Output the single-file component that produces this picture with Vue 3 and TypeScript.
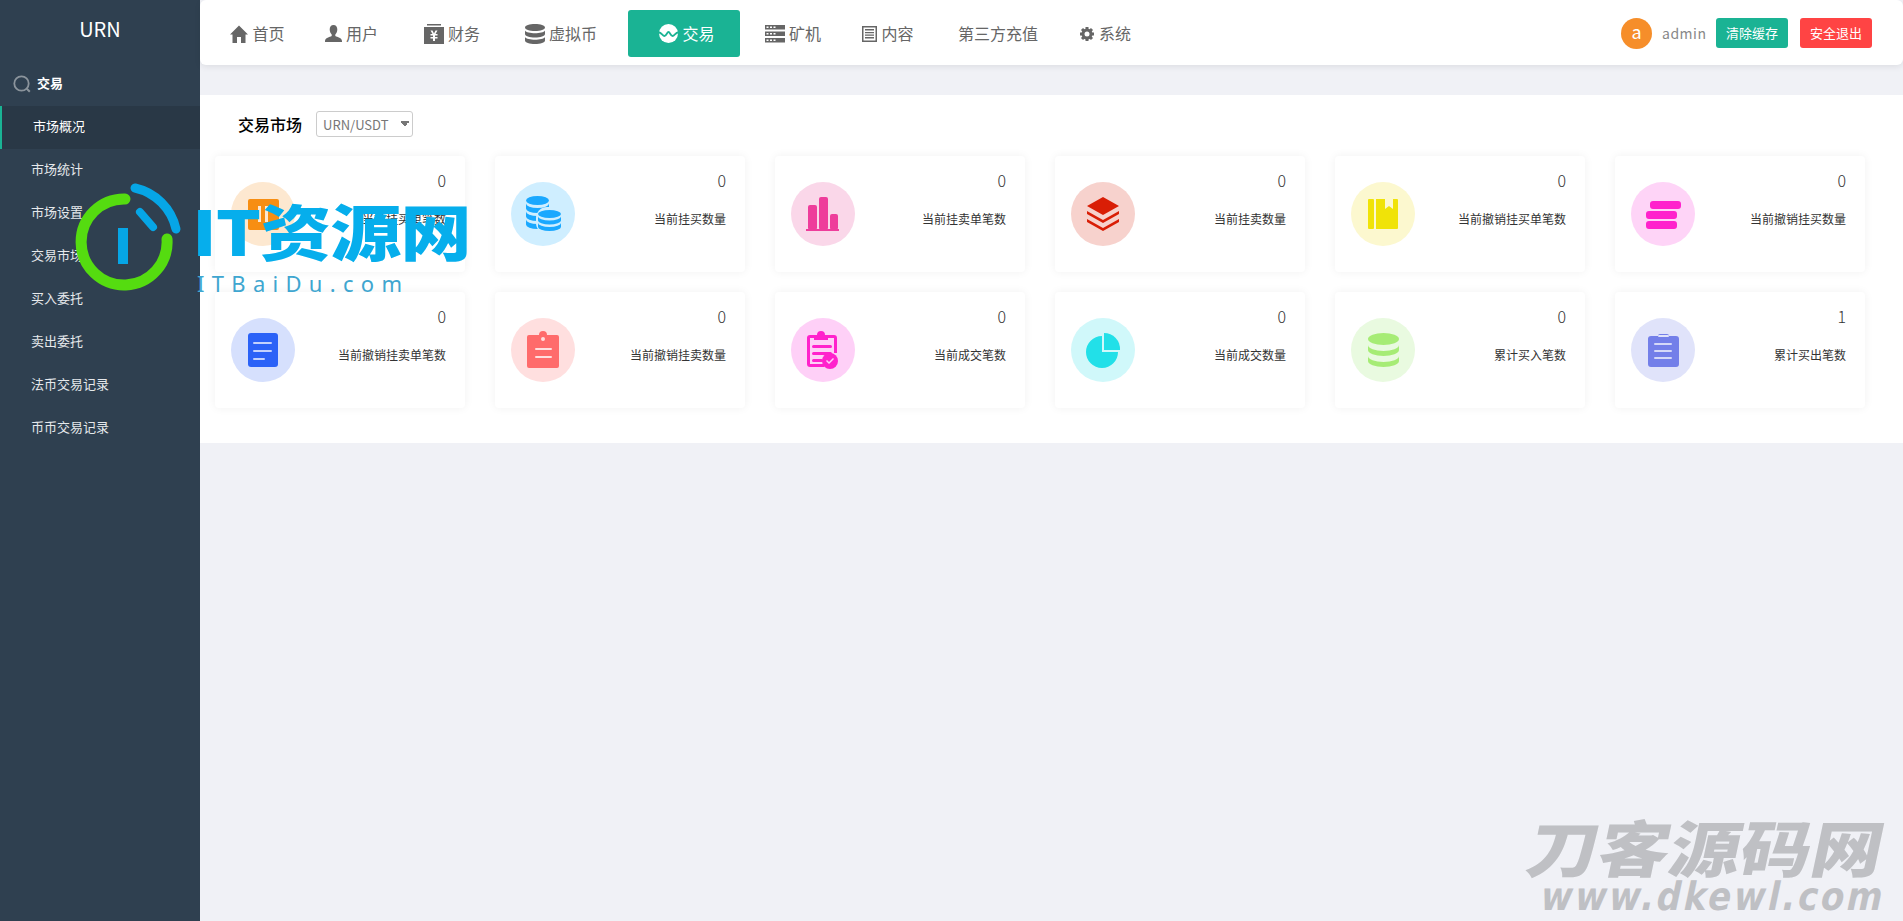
<script setup lang="ts">
interface Shape {
  d: string
  fill: string
}

interface Card {
  label: string
  value: number
  bg: string
  shapes: Shape[]
}

// rounded rectangle as a path
const rr = (x: number, y: number, w: number, h: number, r: number) =>
  `M${x + r} ${y}h${w - 2 * r}a${r} ${r} 0 0 1 ${r} ${r}v${h - 2 * r}a${r} ${r} 0 0 1 -${r} ${r}h-${w - 2 * r}a${r} ${r} 0 0 1 -${r} -${r}v-${h - 2 * r}a${r} ${r} 0 0 1 ${r} -${r}z`

// database style stack: a top ellipse and n bands below it
const stack = (cx: number, rx: number, top: number, ry: number, step: number, band: number, n: number) => {
  const l = cx - rx
  const y = top + ry
  let d = `M${l} ${y}a${rx} ${ry} 0 1 1 ${2 * rx} 0a${rx} ${ry} 0 1 1 -${2 * rx} 0z`
  for (let i = 1; i <= n; i++) {
    const y1 = y + i * step
    d += `M${l} ${y1 - band}a${rx} ${ry} 0 0 0 ${2 * rx} 0V${y1}a${rx} ${ry} 0 0 1 -${2 * rx} 0z`
  }
  return d
}

const cards: Card[] = [
  {
    label: '当前挂买单笔数', value: 0, bg: '#fde8d0',
    shapes: [
      { d: rr(17, 17, 31, 31, 2), fill: '#f78e12' },
      { d: 'M27 24h3v16h-3zM34 24h3v16h-3z', fill: '#fde8d0' }
    ]
  },
  {
    label: '当前挂买数量', value: 0, bg: '#cfeeff',
    shapes: [
      { d: stack(26.5, 11.5, 14, 4.5, 8, 5, 3), fill: '#1aa8ff' },
      { d: rr(25, 25, 27, 27, 11), fill: '#cfeeff' },
      { d: stack(38.5, 11.5, 28, 4, 6.5, 4, 2), fill: '#1aa8ff' }
    ]
  },
  {
    label: '当前挂卖单笔数', value: 0, bg: '#fad7e9',
    shapes: [
      { d: rr(17, 23, 9, 25, 2) + rr(28, 15, 9, 33, 2) + rr(39, 32, 8, 16, 2) + 'M15 47h33v2H15z', fill: '#ee3d9b' }
    ]
  },
  {
    label: '当前挂卖数量', value: 0, bg: '#f7d2cd',
    shapes: [
      { d: 'M32 15l16 9-16 9-16-9zM16 29l16 9 16-9v3L32 41l-16-9zM16 37l16 9 16-9v3L32 49l-16-9z', fill: '#d91e06' }
    ]
  },
  {
    label: '当前撤销挂买单笔数', value: 0, bg: '#fcf8cf',
    shapes: [
      { d: rr(17, 17, 6, 30, 1) + 'M25 17h9v10l4-3 4 3V17h4a1 1 0 0 1 1 1v28a1 1 0 0 1-1 1H25z', fill: '#f0e308' }
    ]
  },
  {
    label: '当前撤销挂买数量', value: 0, bg: '#fed4f7',
    shapes: [
      { d: rr(19, 19, 31, 8, 3) + rr(15, 29, 31, 8, 3) + rr(15, 39, 31, 8, 3), fill: '#ff22cc' }
    ]
  },
  {
    label: '当前撤销挂卖单笔数', value: 0, bg: '#d6e0fd',
    shapes: [
      { d: rr(17, 15, 30, 34, 3), fill: '#2b62f7' },
      { d: rr(22, 24, 19, 2, 1) + rr(22, 32, 19, 2, 1) + rr(22, 40, 12, 2, 1), fill: '#c3d2fd' }
    ]
  },
  {
    label: '当前撤销挂卖数量', value: 0, bg: '#ffdfdf',
    shapes: [
      { d: 'M18 17h10a4 4 0 0 1 8 0h10a2 2 0 0 1 2 2v29a2 2 0 0 1-2 2H18a2 2 0 0 1-2-2V19a2 2 0 0 1 2-2z', fill: '#ff6b6b' },
      { d: 'M32 19a2 2 0 1 1 0 4 2 2 0 0 1 0-4z' + rr(24, 30, 17, 2, 1) + rr(24, 38, 17, 2, 1), fill: '#ffdfdf' }
    ]
  },
  {
    label: '当前成交笔数', value: 0, bg: '#fed0f7',
    shapes: [
      { d: 'M19 17h7a4 4 0 0 1 8 0h9a3 3 0 0 1 3 3v15h-3V20h-6v2H23v-2h-4v26h14v3H19a3 3 0 0 1-3-3V20a3 3 0 0 1 3-3z', fill: '#ff22cc' },
      { d: rr(21, 27, 20, 3, 1.5) + rr(21, 34, 20, 3, 1.5) + rr(21, 41, 11, 3, 1.5), fill: '#ff22cc' },
      { d: 'M39 35a8 8 0 1 1 0 16 8 8 0 0 1 0-16z', fill: '#ff22cc' },
      { d: 'M35 43l3 3 5-5-1-1-4 4-2-2z', fill: '#fed0f7' }
    ]
  },
  {
    label: '当前成交数量', value: 0, bg: '#d0f8fa',
    shapes: [
      { d: 'M31 18v16h16a16 16 0 1 1-16-16z', fill: '#22e0e8' },
      { d: 'M33 15a16 16 0 0 1 16 17H33z', fill: '#22e0e8' }
    ]
  },
  {
    label: '累计买入笔数', value: 0, bg: '#e9fae0',
    shapes: [{ d: stack(32.5, 15.5, 15, 6, 11, 5, 2), fill: '#a6ec75' }]
  },
  {
    label: '累计买出笔数', value: 1, bg: '#e0e3fa',
    shapes: [
      { d: rr(17, 18, 31, 31, 3) + rr(27, 16, 11, 4, 2), fill: '#737fe9' },
      { d: rr(27, 17, 11, 2, 1), fill: '#e0e3fa' },
      { d: rr(23, 25, 18, 2, 1) + rr(23, 32, 18, 2, 1) + rr(23, 39, 18, 2, 1), fill: '#d5d9f8' }
    ]
  }
]

const subMenus = ['市场统计', '市场设置', '交易市场', '买入委托', '卖出委托', '法币交易记录', '币币交易记录']

const navItems = [
  { key: 'home', label: '首页', width: 95 },
  { key: 'user', label: '用户', width: 93 },
  { key: 'finance', label: '财务', width: 108 },
  { key: 'coin', label: '虚拟币', width: 110 },
  { key: 'trade', label: '交易', width: 112, active: true },
  { key: 'miner', label: '矿机', width: 106 },
  { key: 'content', label: '内容', width: 84 },
  { key: 'recharge', label: '第三方充值', width: 136 },
  { key: 'system', label: '系统', width: 78 }
]
</script>

<template>
  <div class="page">
    <aside class="sidebar">
      <div class="brand">URN</div>
      <div class="section">
        <svg class="section-icon" viewBox="0 0 18 18" width="18" height="18">
          <circle cx="8.5" cy="8.5" r="7.2" fill="none" stroke="#8b949c" stroke-width="1.8" />
          <path d="M13.8 13.8l3 3" stroke="#8b949c" stroke-width="2" />
        </svg>
        <span>交易</span>
      </div>
      <div class="menu-item active">市场概况</div>
      <div v-for="m in subMenus" :key="m" class="menu-item">{{ m }}</div>
    </aside>

    <main class="main">
      <header class="topbar">
        <nav class="nav">
          <a
            v-for="item in navItems"
            :key="item.key"
            class="nav-item"
            :class="{ current: item.active }"
            :style="{ width: item.width + 'px' }"
          >
            <svg v-if="item.key === 'home'" viewBox="0 0 18 18" width="18" height="18">
              <path d="M9 0.5L18 9.5h-2.5V18h-4.5v-6H7v6H2.500V9.500H0z" fill="#666" />
            </svg>
            <svg v-else-if="item.key === 'user'" viewBox="0 0 17 17" width="17" height="17">
              <path d="M8.500 0c2.500 0 3.800 2 3.800 4.500 0 2-1 4-2 5v1.500c2 1 6.700 2 6.700 5v1H0v-1c0-3 4.700-4 6.700-5V9.500c-1-1-2-3-2-5C4.700 2 6 0 8.500 0z" fill="#666" />
            </svg>
            <svg v-else-if="item.key === 'finance'" viewBox="0 0 20 20" width="20" height="20">
              <path d="M3 0h14v1.500H3z" fill="#666" />
              <path d="M0 3h20v17H0z" fill="#666" />
              <path d="M6.500 6.500h2l1.500 3 1.500-3h2L11.500 10h2v1.500H11V13h2.500v1.500H11V17H9v-2.500H6.500V13H9v-1.500H6.500V10h2z" fill="#fff" />
            </svg>
            <svg v-else-if="item.key === 'coin'" viewBox="0 0 20 20" width="20" height="20">
              <path d="M0 3.500C0 1.500 4.500 0 10 0s10 1.500 10 3.500S15.500 7 10 7 0 5.500 0 3.500zM0 6.500C1 8.500 5.500 9.200 10 9.200S19 8.500 20 6.500V10c0 2-4.500 3.500-10 3.500S0 12 0 10zM0 13C1 15 5.500 15.700 10 15.700S19 15 20 13v3.500c0 2-4.500 3.500-10 3.500S0 18.500 0 16.500z" fill="#666" />
            </svg>
            <svg v-else-if="item.key === 'trade'" viewBox="0 0 19 19" width="19" height="19">
              <circle cx="9.500" cy="9.500" r="9.500" fill="#fff" />
              <path d="M0 8.500c2.500 0 3.500 3.500 5.500 3.500S8 8 9.500 8s2 4 4 4 3-3.500 5.500-3.500" fill="none" stroke="#1ab394" stroke-width="1.800" />
            </svg>
            <svg v-else-if="item.key === 'miner'" viewBox="0 0 20 18" width="20" height="18">
              <path d="M0 0h20v4.500H0zM0 6.500h20V11H0zM0 13h20v4.500H0z" fill="#666" />
              <path d="M1.500 1.500h2v1.500h-2zM5 1.500h2v1.500H5zM8.500 1.500h2v1.500h-2zM1.500 8h2v1.500h-2zM5 8h2v1.500H5zM8.500 8h2v1.500h-2zM1.500 14.500h2V16h-2zM5 14.500h2V16H5zM8.500 14.500h2V16h-2z" fill="#fff" />
            </svg>
            <svg v-else-if="item.key === 'content'" viewBox="0 0 15 16" width="15" height="16">
              <path d="M0 0h15v16H0zM1.500 1.500v13h12v-13z" fill="#666" fill-rule="evenodd" />
              <path d="M3 3h9v1.500H3zM3 6h9v1.300H3zM3 8.500h9v1.300H3zM3 11h9v1.500H3z" fill="#666" />
            </svg>
            <svg v-else-if="item.key === 'system'" viewBox="0 0 16 16" width="16" height="16">
              <path d="M8 1v14M1 8h14M3 3l10 10M13 3L3 13" stroke="#666" stroke-width="3" />
              <circle cx="8" cy="8" r="5.500" fill="#666" />
              <circle cx="8" cy="8" r="2.500" fill="#fff" />
            </svg>
            <span>{{ item.label }}</span>
          </a>
        </nav>
        <div class="userbox">
          <span class="avatar">a</span>
          <span class="username">admin</span>
          <button class="btn green">清除缓存</button>
          <button class="btn red">安全退出</button>
        </div>
      </header>

      <section class="panel">
        <div class="panel-head">
          <span class="panel-title">交易市场</span>
          <select class="market">
            <option>URN/USDT</option>
          </select>
        </div>
        <div class="grid">
          <div v-for="c in cards" :key="c.label" class="card">
            <svg class="card-icon" viewBox="0 0 64 64" width="64" height="64">
              <circle cx="32" cy="32" r="32" :fill="c.bg" />
              <path v-for="(s, i) in c.shapes" :key="i" :d="s.d" :fill="s.fill" />
            </svg>
            <div class="card-text">
              <div class="card-value">{{ c.value }}</div>
              <div class="card-label">{{ c.label }}</div>
            </div>
          </div>
        </div>
      </section>
    </main>

    <!-- 浮层水印 -->
    <div class="mark-it">
      <svg class="mark-ring" viewBox="0 0 120 110" width="120" height="110">
        <path d="M60 12A43 43 0 1 0 102 52" fill="none" stroke="#55dc10" stroke-width="11" stroke-linecap="round" />
        <path d="M70 1A54 54 0 0 1 111 42" fill="none" stroke="#06a6e6" stroke-width="9" stroke-linecap="round" />
        <path d="M75 25l13 15" fill="none" stroke="#06a6e6" stroke-width="8" stroke-linecap="round" />
        <path d="M53 41h10v36H53z" fill="#06a6e6" />
      </svg>
      <div class="mark-name">IT资源网</div>
      <div class="mark-url">ITBaiDu.com</div>
    </div>
    <div class="mark-dk">
      <div class="mark-dk-name">刀客源码网</div>
      <div class="mark-dk-url">www.dkewl.com</div>
    </div>
  </div>
</template>

<style>
body {
  background: #f0f1f6;
}
</style>

<style scoped>
.page {
  display: flex;
  position: relative;
  width: 1903px;
  height: 921px;
  overflow: hidden;
  background: #f0f1f6;
  font-family: "Noto Sans CJK SC", "Noto Sans", sans-serif;
}

.sidebar {
  width: 200px;
  flex: none;
  background: #2f4050;
  color: #fff;
}

.brand {
  height: 62px;
  padding-top: 14px;
  box-sizing: border-box;
  text-align: center;
  font-size: 20px;
  line-height: 30px;
}

.section {
  height: 44px;
  display: flex;
  align-items: center;
  gap: 6px;
  padding-left: 13px;
  font-size: 13px;
  font-weight: 700;
}

.section span {
  margin-top: -4px;
}

.menu-item {
  height: 43px;
  line-height: 39px;
  padding-left: 31px;
  font-size: 13px;
  color: #e6e9ec;
}

.menu-item.active {
  background: #293846;
  border-left: 2px solid #1ab394;
  color: #fff;
}

.main {
  flex: 1;
  min-width: 0;
}

.topbar {
  height: 65px;
  background: #fff;
  border-radius: 6px;
  box-shadow: 0 2px 6px rgba(0, 0, 0, 0.08);
  display: flex;
  justify-content: space-between;
  align-items: center;
  padding: 0 31px 0 10px;
}

.nav {
  display: flex;
  align-items: center;
}

.nav-item {
  height: 47px;
  display: flex;
  align-items: center;
  justify-content: center;
  gap: 4px;
  font-size: 16px;
  color: #666;
  margin-top: 2px;
  box-sizing: border-box;
}

.nav-item span {
  margin-top: -2px;
}

.nav-item.current {
  background: #1ab394;
  color: #fff;
  border-radius: 3px;
  margin-left: 12px;
  padding-left: 6px;
}

.userbox {
  display: flex;
  align-items: center;
  margin-top: 1px;
}

.avatar {
  width: 31px;
  height: 31px;
  border-radius: 50%;
  background: #f68e2a;
  color: #fff;
  font-size: 18px;
  line-height: 27px;
  text-align: center;
}

.username {
  margin: 0 13px 0 10px;
  font-size: 14px;
  line-height: 28px;
  color: #888;
  width: 41px;
  letter-spacing: 0.5px;
}

.btn {
  width: 72px;
  height: 30px;
  padding: 0 0 2px;
  border: none;
  border-radius: 3px;
  color: #fff;
  font-family: inherit;
  font-size: 13px;
}

.btn.green {
  background: #1ab394;
  margin-right: 12px;
}

.btn.red {
  background: #ff4444;
}

.panel {
  margin-top: 30px;
  height: 348px;
  box-sizing: border-box;
  background: #fff;
  padding: 16px 38px 0 15px;
}

.panel-head {
  height: 26px;
  display: flex;
  align-items: center;
  padding-left: 23px;
  gap: 14px;
}

.panel-title {
  font-size: 16px;
  font-weight: 500;
  color: #000;
}

.market {
  appearance: none;
  width: 97px;
  height: 26px;
  border: 1px solid #ccc;
  border-radius: 3px;
  background-color: #fff;
  background-image:
    linear-gradient(45deg, transparent 50%, #777 50%),
    linear-gradient(-45deg, transparent 50%, #777 50%);
  background-size: 4px 6px;
  background-position: 84px 9px, 88px 9px;
  background-repeat: no-repeat;
  color: #777;
  font-family: inherit;
  font-size: 13px;
  padding: 0 0 0 6px;
}

.grid {
  display: grid;
  grid-template-columns: repeat(6, 250px);
  gap: 20px 30px;
  margin-top: 19px;
}

.card {
  height: 116px;
  display: flex;
  justify-content: space-between;
  border-radius: 4px;
  background: #fff;
  box-shadow: 0 0 10px rgba(0, 0, 0, 0.06);
  padding: 0 19px 0 16px;
  box-sizing: border-box;
}

.card-icon {
  margin-top: 26px;
  flex: none;
}

.card-text {
  text-align: right;
  color: #333;
}

.card-value {
  margin-top: 13px;
  font-size: 16px;
  line-height: 22px;
  font-weight: 300;
}

.card-label {
  margin-top: 17px;
  font-size: 12px;
  line-height: 22px;
}

.mark-it {
  position: absolute;
  left: 0;
  top: 0;
}

.mark-ring {
  position: absolute;
  left: 65px;
  top: 187px;
  overflow: visible;
}

.mark-name {
  position: absolute;
  left: 192px;
  top: 183px;
  font-size: 70px;
  line-height: 100px;
  font-weight: 900;
  color: #06aeec;
  white-space: nowrap;
  letter-spacing: -1px;
  transform: scale(1.015, 0.88);
  transform-origin: 0 22px;
}

.mark-url {
  position: absolute;
  left: 197px;
  top: 270px;
  height: 22px;
  overflow: hidden;
  font-family: "Noto Sans", sans-serif;
  font-size: 22px;
  line-height: 27px;
  letter-spacing: 7.3px;
  color: #3fa6d0;
  white-space: nowrap;
}

.mark-dk {
  position: absolute;
  left: 1526px;
  top: 812px;
  width: 365px;
  color: #bfc0c4;
  transform: skewX(-12deg);
}

.mark-dk-name {
  height: 68px;
  font-size: 71px;
  line-height: 76px;
  font-weight: 900;
  white-space: nowrap;
  transform: scaleY(0.86);
  transform-origin: 0 8px;
}

.mark-dk-url {
  margin-left: 23px;
  font-family: "DejaVu Sans", sans-serif;
  font-size: 34px;
  line-height: 32px;
  font-weight: 700;
  letter-spacing: 2.7px;
  white-space: nowrap;
  transform: scaleY(1.15);
}
</style>
